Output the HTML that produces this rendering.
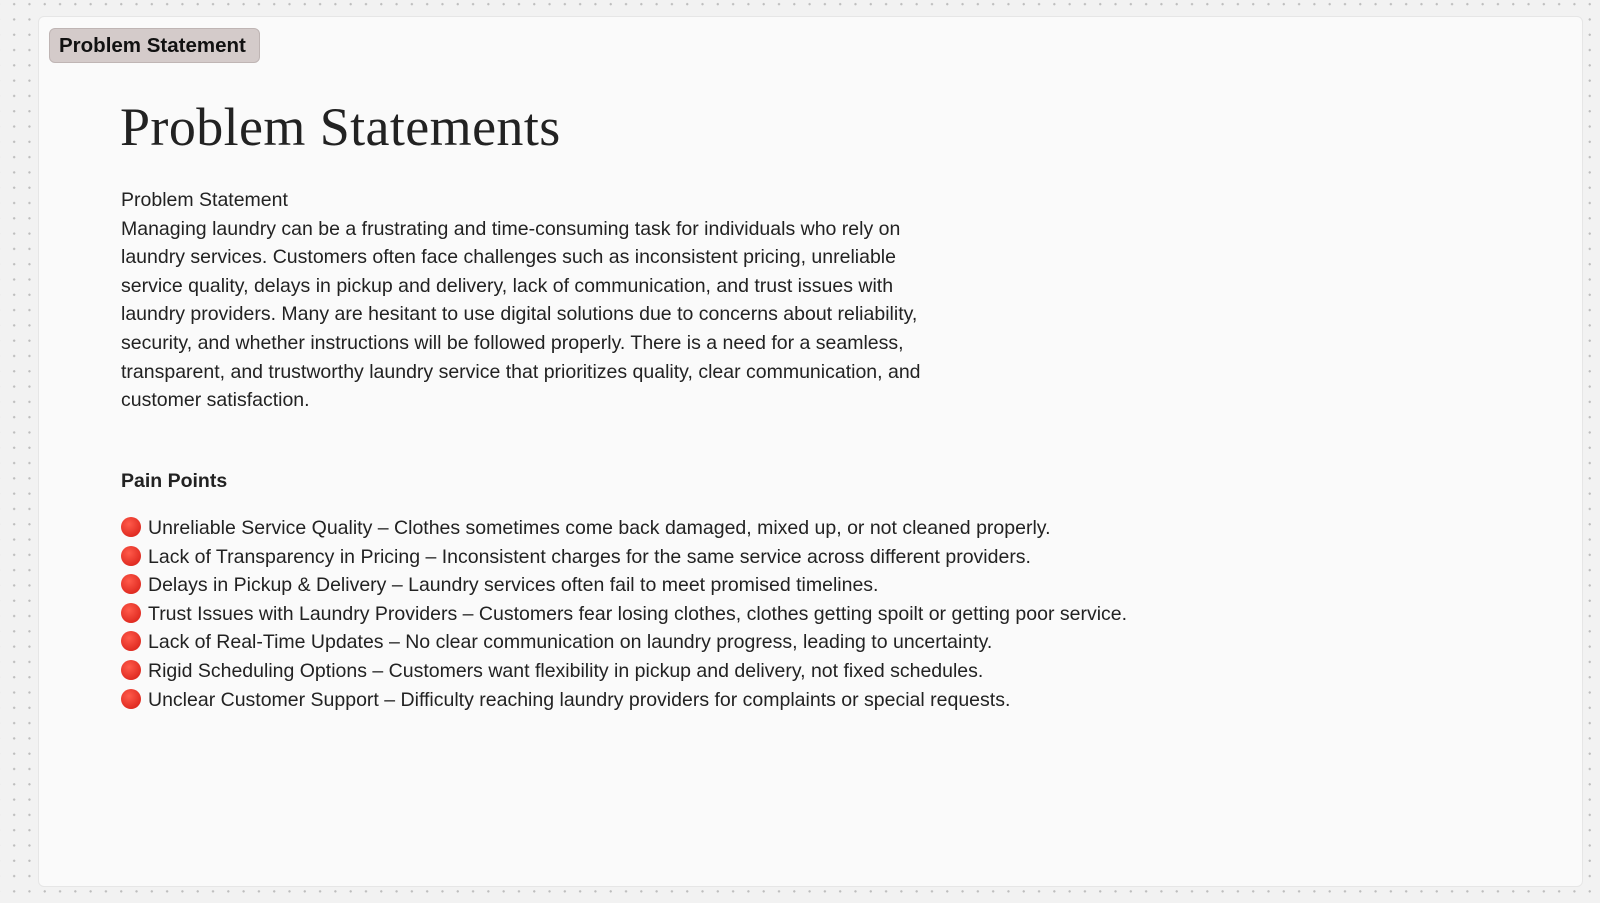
<!DOCTYPE html>
<html><head><style>
html,body{margin:0;padding:0}
body{width:1600px;height:903px;overflow:hidden;background-color:#f2f2f2;
background-image:radial-gradient(circle,#bdbdbd 1px,transparent 1.3px);background-size:15.3px 15.3px;background-position:6.5px -3.5px;position:relative;font-family:"Liberation Sans",sans-serif;color:#1e1e1e}
.panel{position:absolute;left:38px;top:16px;width:1545px;height:871px;background:#fafafa;border:1px solid #e6e6e6;border-radius:6px;box-sizing:border-box}
.tag{position:absolute;left:49px;top:28px;width:211px;height:35px;box-sizing:border-box;background:#d4cbca;border:1px solid #bfb5b4;border-radius:6px;font-size:20.5px;font-weight:bold;line-height:34px;padding-left:9px;color:#111}
h1{position:absolute;left:120px;top:96px;margin:0;font-family:"Liberation Serif",serif;font-weight:normal;font-size:54px;letter-spacing:0.4px;line-height:62px;color:#222}
.t{position:absolute;left:121px;font-size:19.5px;line-height:28.6px;color:#222}
.pp{font-weight:bold}
.dot{display:inline-block;width:20px;height:20px;border-radius:50%;background:radial-gradient(circle at 40% 35%,#ff5a4a,#d41a12);vertical-align:-3px;margin-right:7px}
</style></head><body>
<div class="panel"></div>
<div class="tag">Problem Statement</div>
<h1>Problem Statements</h1>
<div class="t" style="top:186px;white-space:nowrap">Problem Statement<br>Managing laundry can be a frustrating and time-consuming task for individuals who rely on<br>laundry services. Customers often face challenges such as inconsistent pricing, unreliable<br>service quality, delays in pickup and delivery, lack of communication, and trust issues with<br>laundry providers. Many are hesitant to use digital solutions due to concerns about reliability,<br>security, and whether instructions will be followed properly. There is a need for a seamless,<br>transparent, and trustworthy laundry service that prioritizes quality, clear communication, and<br>customer satisfaction.</div>
<div class="t pp" style="top:467px">Pain Points</div>
<div class="t" style="top:514px;white-space:nowrap">
<span class="dot"></span>Unreliable Service Quality – Clothes sometimes come back damaged, mixed up, or not cleaned properly.<br>
<span class="dot"></span>Lack of Transparency in Pricing – Inconsistent charges for the same service across different providers.<br>
<span class="dot"></span>Delays in Pickup &amp; Delivery – Laundry services often fail to meet promised timelines.<br>
<span class="dot"></span>Trust Issues with Laundry Providers – Customers fear losing clothes, clothes getting spoilt or getting poor service.<br>
<span class="dot"></span>Lack of Real-Time Updates – No clear communication on laundry progress, leading to uncertainty.<br>
<span class="dot"></span>Rigid Scheduling Options – Customers want flexibility in pickup and delivery, not fixed schedules.<br>
<span class="dot"></span>Unclear Customer Support – Difficulty reaching laundry providers for complaints or special requests.</div>
</body></html>
